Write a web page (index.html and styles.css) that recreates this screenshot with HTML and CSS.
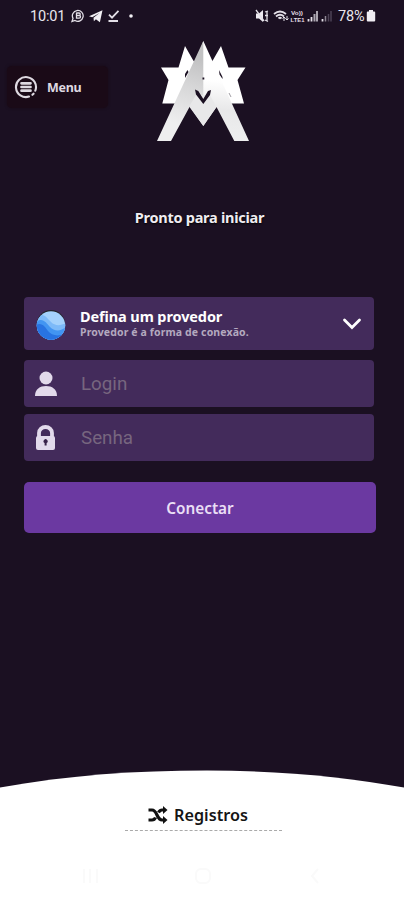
FILE: index.html
```html
<!DOCTYPE html>
<html lang="pt-BR">
<head>
<meta charset="utf-8">
<meta name="viewport" content="width=device-width, initial-scale=1">
<title>Conectar</title>
<link rel="stylesheet" href="styles.css">
</head>
<body>
<div class="screen">
  <div class="status">
    <span class="clock">10:01</span>
    <svg class="status-left" width="64" height="16" viewBox="0 0 64 16" fill="none" stroke="#e3dfe7">
      <path d="M1 13.4 2 10.4A5.4 5.4 0 1 1 4 12.5Z" stroke-width="1.3"/>
      <path d="M5.5 4.5v6M5.5 5H8a1.2 1.2 0 0 1 0 2.5H5.5m0 0h2.7a1.3 1.3 0 0 1 0 2.7H5.5Z" stroke-width="1.3"/>
      <path d="M18 8.3 31.5 2.2 28.9 14.2 24.9 11.3 22.9 13.3 22.5 9.7 28.5 5 21.2 9.3Z" fill="#f2f0f4" stroke="none"/>
      <path d="m38 6.7 3 3L47.5 2.8M37.5 13H47" stroke-width="1.8"/>
      <circle cx="60" cy="8" r="1.8" fill="#f2f0f4" stroke="none"/>
    </svg>
    <svg class="status-right" width="80" height="16" viewBox="0 0 80 16" fill="none" stroke="#e3dfe7">
      <path d="M1 5.500h3L8 2v12l-4-3.500H1Z" fill="#eeeaf1" stroke="none"/>
      <path d="m1 2 8 11M10 4l3-1m-3 4.500h3M10 12l3 1.500M12 3.500v10" stroke-width="1.300"/>
      <path d="M19 6q6-5 12 0M21 8.500q4-3.500 8 0M23.500 10.500q1.500-1.500 3 0" stroke-width="1.800"/>
      <path d="M29 13V9m-1.500 1.500L29 9l1.500 1.500M32 8v4m-1.500-1.500L32 12l1.500-1.500" stroke-width="1"/>
      <text class="volte" x="36" y="7.200" textLength="12" lengthAdjust="spacingAndGlyphs">Vo))</text>
      <text class="volte" x="35.500" y="13.700" textLength="14" lengthAdjust="spacingAndGlyphs">LTE1</text>
      <path d="M53.500 11v2.500M56.500 9v4.500" stroke-width="1.800"/>
      <path d="M59.500 6v7.500M62 3v10.500" stroke-width="2" stroke="#aaa4af"/>
      <path d="M67.500 11v2.500" stroke-width="1.800"/>
      <path d="M70.500 8v5.500" stroke-width="1.500" stroke="#8d8593"/>
      <path d="M73.500 6v7.500M76 3v10.500" stroke-width="1.500" stroke="#4c4255"/>
    </svg>
    <span class="percent">78%</span>
    <svg class="battery" width="10" height="12" viewBox="0 0 10 12"><path d="M3 0h4v1.500h1.200q1 0 1 1v8q0 1-1 1H1.800q-1 0-1-1v-8q0-1 1-1H3Z" fill="#f0edf3"/></svg>
  </div>

  <header class="top">
    <button class="menu">
      <svg width="24" height="24" viewBox="0 0 24 24" fill="none" stroke="#ded9e1" stroke-width="2.100">
        <path d="M15 21.600A10 10 0 1 1 21.300 15.700" stroke-linecap="round"/>
        <path d="m18.400 19.800 1.200-1.100" stroke-linecap="round"/>
        <path d="M7.500 8.300h9M7.500 12h9M7.500 15.700h9" stroke-width="2.700" stroke-linecap="round"/>
      </svg>
      <span>Menu</span>
    </button>
    <svg class="logo" width="94" height="104" viewBox="156 39 94 104">
      <defs>
        <linearGradient id="left" gradientUnits="userSpaceOnUse" x1="200" y1="60" x2="180" y2="125">
          <stop offset="0" stop-color="#c2c2c3"/><stop offset=".4" stop-color="#d6d6d7"/><stop offset="1" stop-color="#eeeeef"/>
        </linearGradient>
        <linearGradient id="right" gradientUnits="userSpaceOnUse" x1="215" y1="80" x2="211" y2="138">
          <stop offset="0" stop-color="#fff"/><stop offset=".5" stop-color="#e8e8e9"/><stop offset="1" stop-color="#eeeeef"/>
        </linearGradient>
      </defs>
      <path d="M185 46 193 60 203 75 213 60 221 46 228.500 67.500H245.500L237.500 80 244 103.500H231L216 90H190L175 103.500H162.300L168.500 80 161 67.500H178.500Z" fill="#fff"/>
      <path d="M203.300 41 249 141H234.300L216.500 107 203.300 126 189.500 107V85Z" fill="url(#right)"/>
      <path d="M203.300 41V95L189.500 107 171 141H157Z" fill="url(#left)"/>
      <path d="M196 95 189.500 106 203.300 126 216.500 107 210 95Z" fill="#e8e8e9"/>
      <path d="m195 89.500 3.300 1.500 5 8 4.700-8 3-1-1 5-6.700 9-7.300-9.500Z" fill="#1b1022"/>
      <path d="m187.500 70-2.500 4v4l3.500-6ZM219 70l3.500 7v2l-3-4.500ZM202.500 77.500h1.800v2h-1.800Z" fill="#1b1022"/>
      <path d="m229 93 2 4" stroke="#77727b" stroke-width=".7"/>
    </svg>
  </header>

  <h1 class="state"><span>Pronto para iniciar</span></h1>

  <main class="form">
    <div class="provider">
      <svg class="globe" width="30" height="30" viewBox="0 0 30 30">
        <defs><clipPath id="disc"><circle cx="15" cy="15.500" r="14.200"/></clipPath></defs>
        <circle cx="15" cy="14" r="14" fill="#24252b"/>
        <g clip-path="url(#disc)">
          <path d="M0 0h30v30H0Z" fill="#a4d2fc"/>
          <path d="M0 6C8 2 11 8 15 12S24 16 30 13V30H0Z" fill="#7dbaf8"/>
          <path d="M0 12C7 7 10 13 14 17S24 22 30 17V30H0Z" fill="#4295f2"/>
          <path d="M0 15C6 12 9 17 12 21S22 27 27 24V30H0Z" fill="#2873e2"/>
        </g>
      </svg>
      <div class="provider-text">
        <strong>Defina um provedor</strong>
        <small>Provedor é a forma de conexão.</small>
      </div>
      <svg class="chevron" width="20" height="14" viewBox="0 0 20 14"><path d="m2.500 3 7.500 7.500L17.500 3" fill="none" stroke="#fff" stroke-width="2.800" stroke-linecap="round"/></svg>
    </div>
    <label class="field">
      <svg width="24" height="28" viewBox="0 0 24 28" fill="#e2daeb"><circle cx="12" cy="8" r="6.500"/><path d="M1 26C1 19 6 16 12 16s11 3 11 10Z"/></svg>
      <input type="text" placeholder="Login">
    </label>
    <label class="field">
      <svg width="24" height="28" viewBox="0 0 24 28"><path d="M5 13V9a6.500 6 0 0 1 13 0v4" fill="none" stroke="#e2daeb" stroke-width="3.800"/><rect x="2" y="12" width="19" height="14" rx="2" fill="#e2daeb"/><path d="M10.600 21.500V19a2 2 0 1 1 2 0v2.500Z" fill="#382249"/></svg>
      <input type="password" placeholder="Senha">
    </label>
    <button class="connect">Conectar</button>
  </main>

  <footer class="sheet">
    <svg class="curve" width="404" height="18" viewBox="0 0 404 18"><path d="M0 17.500C70 5 135 .5 207 .5S347 7 404 17.500V18H0Z" fill="#fff"/></svg>
    <div class="sheet-body">
      <div class="logs">
        <svg width="20" height="18" viewBox="0 0 20 18" fill="none" stroke="#111" stroke-width="3.200"><path d="M.5 4H4C9.500 4 8.500 14 14 14h2M.5 14H4q2.500 0 3.500-2.500M10.500 6.500Q12 4 14 4h2"/><path d="m15 0 4.500 4L15 8ZM15 10l4.500 4-4.500 4Z" fill="#111" stroke="none"/></svg>
        <span>Registros</span>
      </div>
      <div class="nav">
        <svg width="18" height="18" viewBox="0 0 18 18"><path d="M2 2v14M8 2v14M15 2v14"/></svg>
        <svg width="18" height="18" viewBox="0 0 18 18"><rect x="2" y="2" width="14" height="14" rx="5"/></svg>
        <svg width="18" height="18" viewBox="0 0 18 18"><path d="m12 2-6 7 6 7"/></svg>
      </div>
    </div>
  </footer>
</div>
</body>
</html>
```

FILE: styles.css
```css
* { box-sizing: border-box; }
body { margin: 0; background: #1b1022; }
button { border: 0; padding: 0; font: inherit; }
svg { display: block; flex: none; }

.screen {
  display: flex;
  flex-direction: column;
  width: 404px;
  height: 900px;
  overflow: hidden;
  background: #1b1022;
  font-family: "Noto Sans", sans-serif;
}

.status {
  display: flex;
  align-items: center;
  height: 32px;
  padding: 0 27px 0 30px;
  color: #e9e6ec;
  font: 14.5px/33px Roboto, sans-serif;
  white-space: nowrap;
}
.clock { width: 41px; letter-spacing: -.2px; }
.status-right { margin-left: 120px; }
.volte { font: bold 6px "Liberation Sans", sans-serif; fill: #e3dfe7; stroke: none; }
.percent { width: 28px; margin-left: 3px; letter-spacing: -.1px; }

.top { display: flex; height: 114px; padding-left: 7px; }
.menu {
  display: flex;
  align-items: center;
  gap: 9px;
  width: 101px;
  height: 42px;
  margin-top: 34px;
  padding-left: 7px;
  border-radius: 5px;
  background: #1a0a17;
  box-shadow: 0 0 3px #180914;
  color: #ded9e1;
  font-size: 12.5px;
  font-weight: 700;
  letter-spacing: -.3px;
}
.logo { margin: 7px 0 0 48px; }

.state {
  margin: 57px 0 0;
  height: 28px;
  padding-right: 5px;
  color: #f0edf2;
  font-size: 14.5px;
  line-height: 28px;
  font-weight: 700;
  letter-spacing: -.27px;
  text-align: center;
  text-shadow: 0 1px 2px #000;
}

.form { display: flex; flex-direction: column; margin: 66px 28px 0 24px; }
.provider, .field {
  display: flex;
  align-items: center;
  width: 350px;
  border-radius: 4px;
  background: #432b5b;
}
.provider { height: 53px; padding: 0 12px; }
.globe { margin-top: 2px; }
.provider-text { display: flex; flex-direction: column; flex: 1; margin: 0 0 0 14px; white-space: nowrap; }
.provider-text strong { color: #fff; font-size: 14.5px; line-height: 17px; font-weight: 700; letter-spacing: -.11px; }
.provider-text small { color: #b4a9bf; font-size: 10.5px; line-height: 14px; font-weight: 700; letter-spacing: .12px; }
.field { height: 47px; margin-top: 10px; padding: 0 10px; }
.field + .field { margin-top: 7px; }
.field input {
  width: 260px;
  margin-left: 23px;
  padding: 0;
  border: 0;
  outline: 0;
  background: transparent;
  font: 18.8px/24px Roboto, sans-serif;
}
.field input::placeholder { color: #77667f; opacity: 1; }
.connect {
  height: 51px;
  margin-top: 21px;
  border-radius: 5px;
  background: #6b39a1;
  color: #eadff5;
  font-size: 15.3px;
  font-weight: 600;
}

.sheet { margin-top: auto; }
.sheet-body { height: 112px; padding-top: 13px; background: #fff; }
.logs {
  display: flex;
  justify-content: center;
  align-items: center;
  gap: 6px;
  width: 157px;
  height: 30px;
  margin-left: 125px;
  padding: 0 11px 2px 0;
  border-bottom: 1px dashed #aaa;
  color: #151515;
  font-size: 16.2px;
  font-weight: 600;
}
.nav { display: flex; justify-content: space-between; width: 242px; margin: 36px 0 0 82px; fill: none; stroke: #fafafa; stroke-width: 2; }
```
